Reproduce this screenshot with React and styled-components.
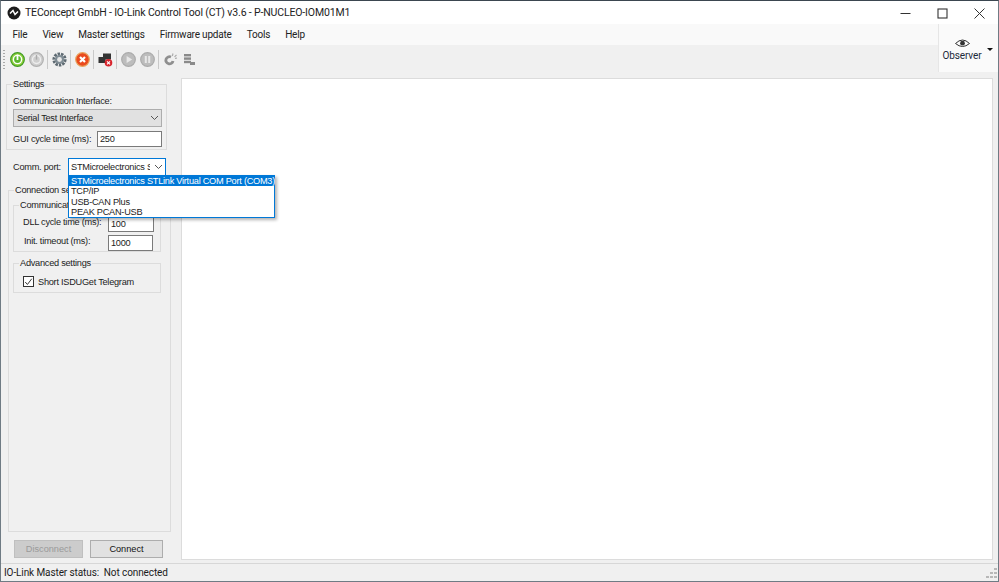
import React from 'react';
import styled, { createGlobalStyle } from 'styled-components';

const MENUS = ['File', 'View', 'Master settings', 'Firmware update', 'Tools', 'Help'];
const PORTS = ['STMicroelectronics STLink Virtual COM Port (COM3)', 'TCP/IP', 'USB-CAN Plus', 'PEAK PCAN-USB'];

function Chevron() {
  return (
    <svg width="9" height="6" viewBox="0 0 9 6" fill="none" stroke="#555" strokeWidth="1">
      <path d="M1 1 L4.5 4.5 L8 1" />
    </svg>
  );
}

function RoundIcon({ color, rim, children }) {
  return (
    <svg width="15" height="15" viewBox="0 0 15 15">
      <circle cx="7.5" cy="7.5" r="6.8" fill={color} stroke={rim} strokeWidth="1.2" />
      {children}
    </svg>
  );
}

function Toolbar() {
  return (
    <ToolRow>
      <Grip />
      <ToolIcon>
        <RoundIcon color="#8fd13c" rim="#3f9a22">
          <circle cx="7.5" cy="7.5" r="4.8" fill="#fff" />
          <circle cx="7.5" cy="7.5" r="3.4" fill="#5cb82c" />
          <rect x="6.6" y="2.5" width="1.8" height="5.5" fill="#fff" />
        </RoundIcon>
      </ToolIcon>
      <ToolIcon>
        <RoundIcon color="#cfcfcf" rim="#b0b0b0">
          <circle cx="7.5" cy="7.5" r="4" fill="none" stroke="#eee" strokeWidth="1.4" />
          <rect x="6.8" y="3" width="1.4" height="4.6" fill="#aaa" />
        </RoundIcon>
      </ToolIcon>
      <Sep />
      <ToolIcon>
        <svg width="15" height="15" viewBox="0 0 15 15">
          <circle cx="7.5" cy="7.5" r="5.6" fill="none" stroke="#5f6b73" strokeWidth="3" strokeDasharray="2.4 1" />
          <circle cx="7.5" cy="7.5" r="4.6" fill="#7f8c94" />
          <circle cx="7.5" cy="7.5" r="2.4" fill="#e8e8e8" />
        </svg>
      </ToolIcon>
      <Sep />
      <ToolIcon>
        <RoundIcon color="#ea4b1e" rim="#e8a35c">
          <path d="M5 5 L10 10 M10 5 L5 10" stroke="#fff" strokeWidth="2.2" />
        </RoundIcon>
      </ToolIcon>
      <Sep />
      <ToolIcon>
        <svg width="15" height="15" viewBox="0 0 15 15">
          <rect x="5" y="1.5" width="8" height="6" fill="#333" />
          <rect x="0.5" y="5" width="7" height="6" fill="#333" />
          <circle cx="10.5" cy="10.8" r="3.8" fill="#d8242c" />
          <path d="M9 9.3 L12 12.3 M12 9.3 L9 12.3" stroke="#fff" strokeWidth="1.2" />
        </svg>
      </ToolIcon>
      <Sep />
      <ToolIcon>
        <RoundIcon color="#bdbdbd" rim="#ababab">
          <path d="M5.6 4 L11.2 7.5 L5.6 11 Z" fill="#e8e8e8" />
        </RoundIcon>
      </ToolIcon>
      <ToolIcon>
        <RoundIcon color="#bdbdbd" rim="#ababab">
          <rect x="4.8" y="4" width="2" height="7" fill="#e8e8e8" />
          <rect x="8.2" y="4" width="2" height="7" fill="#e8e8e8" />
        </RoundIcon>
      </ToolIcon>
      <Sep />
      <ToolIcon>
        <svg width="15" height="15" viewBox="0 0 15 15" fill="none">
          <path d="M8 5 A3.6 3.6 0 1 0 10 9" stroke="#8f8f8f" strokeWidth="2.8" />
          <path d="M10 1.5 L9.4 4 M13.5 3 L11.5 4.8 M14 6 L12 6.4" stroke="#a8a8a8" strokeWidth="1.1" />
        </svg>
      </ToolIcon>
      <ToolIcon>
        <svg width="15" height="15" viewBox="0 0 15 15" fill="#8a8a8a">
          <rect x="2" y="2" width="7" height="2.4" />
          <rect x="2" y="5.4" width="7" height="2.4" />
          <rect x="2" y="8.8" width="7" height="2.4" />
          <rect x="8" y="10" width="5" height="3" />
        </svg>
      </ToolIcon>
    </ToolRow>
  );
}

export default function App() {
  return (
    <>
      <GlobalStyle />
      <Window>
        <TitleBar>
          <TitleLeft>
            <svg width="14" height="14" viewBox="0 0 14 14">
              <circle cx="7" cy="7" r="6.5" fill="#1c1c1c" />
              <path d="M3 7.5 L6 4.5 L8 8.5 L11 5.5" fill="none" stroke="#fff" strokeWidth="1.5" />
            </svg>
            <TitleText>TEConcept GmbH - IO-Link Control Tool (CT) v3.6 - P-NUCLEO-IOM01M1</TitleText>
          </TitleLeft>
          <WinButtons>
            <WinButton>
              <svg width="11" height="11" viewBox="0 0 11 11" stroke="#333" fill="none"><path d="M0.5 5.5 H10.5" /></svg>
            </WinButton>
            <WinButton>
              <svg width="11" height="11" viewBox="0 0 11 11" stroke="#333" fill="none"><rect x="1" y="1" width="9" height="9" strokeWidth="1.1" /></svg>
            </WinButton>
            <WinButton>
              <svg width="11" height="11" viewBox="0 0 11 11" stroke="#333" fill="none"><path d="M0.5 0.5 L10.5 10.5 M10.5 0.5 L0.5 10.5" /></svg>
            </WinButton>
          </WinButtons>
        </TitleBar>

        <TopArea>
          <TopLeft>
            <MenuBar>
              {MENUS.map((m) => <MenuItem key={m}>{m}</MenuItem>)}
            </MenuBar>
            <Toolbar />
          </TopLeft>
          <Observer>
            <svg width="15" height="9" viewBox="0 0 15 9">
              <path d="M0.5 4.5 Q7.5 -2.5 14.5 4.5 Q7.5 10.5 0.5 4.5 Z" fill="none" stroke="#333" strokeWidth="1" />
              <circle cx="7.5" cy="4.2" r="2.4" fill="#333" />
            </svg>
            <ObserverLabel>Observer</ObserverLabel>
            <Caret />
          </Observer>
        </TopArea>

        <Main>
          <Sidebar>
            <SettingsGroup>
              <GroupLegend $x={-1}>Settings</GroupLegend>
              <SmallLabel>Communication Interface:</SmallLabel>
              <GreySelect>
                <span>Serial Test Interface</span>
                <Chevron />
              </GreySelect>
              <FieldRow>
                <span>GUI cycle time (ms):</span>
                <TextBox $w={65}>250</TextBox>
              </FieldRow>
            </SettingsGroup>

            <PortRow>
              <span>Comm. port:</span>
              <PortSelect>
                <PortValue>STMicroelectronics STLink Virtual COM Port (COM3)</PortValue>
                <Chevron />
              </PortSelect>
              <PortList>
                {PORTS.map((p, i) => <PortOption key={p} $active={i === 0}>{p}</PortOption>)}
              </PortList>
            </PortRow>

            <ConnectionGroup>
              <GroupLegend $x={1}>Connection settings</GroupLegend>
              <InnerGroup>
                <GroupLegend $x={-4}>Communication</GroupLegend>
                <InnerField>
                  <span>DLL cycle time (ms):</span>
                  <TextBox $w={46}>100</TextBox>
                </InnerField>
                <InnerField $indent>
                  <span>Init. timeout (ms):</span>
                  <TextBox $w={45}>1000</TextBox>
                </InnerField>
              </InnerGroup>
              <AdvancedGroup>
                <GroupLegend $x={-4}>Advanced settings</GroupLegend>
                <CheckRow>
                  <CheckBox>
                    <svg width="10" height="10" viewBox="0 0 11 11" fill="none" stroke="#222" strokeWidth="1.1">
                      <path d="M1.5 5.5 L4.2 8.5 L9.5 1.5" />
                    </svg>
                  </CheckBox>
                  <span>Short ISDUGet Telegram</span>
                </CheckRow>
              </AdvancedGroup>
            </ConnectionGroup>

            <ButtonRow>
              <DisabledButton>Disconnect</DisabledButton>
              <ConnectButton>Connect</ConnectButton>
            </ButtonRow>
          </Sidebar>
          <Canvas />
        </Main>

        <StatusBar>
          <span>IO-Link Master status:&nbsp; Not connected</span>
          <ResizeGrip />
        </StatusBar>
      </Window>
    </>
  );
}

const GlobalStyle = createGlobalStyle`
  html, body {
    margin: 0;
    padding: 0;
    overflow: hidden;
    background: #f0f0f0;
  }
  body {
    font-family: "Liberation Sans", Arial, sans-serif;
    font-size: 9.2px;
    letter-spacing: -0.25px;
    white-space: nowrap;
    color: #1c1c1c;
  }
`;

const Window = styled.div`
  width: 999px;
  height: 582px;
  box-sizing: border-box;
  display: flex;
  flex-direction: column;
  background: #f0f0f0;
  border-left: 1px solid #6f7b84;
  border-right: 1px solid #6f7b84;
  border-bottom: 1px solid #6f7b84;
  border-top: 1px solid #3b4650;
`;

const TitleBar = styled.div`
  height: 23px;
  flex: none;
  display: flex;
  align-items: center;
  justify-content: space-between;
  background: #fff;
`;

const TitleLeft = styled.div`
  display: flex;
  align-items: center;
  gap: 4px;
  padding-left: 6px;
`;

const TitleText = styled.span`
  font-family: Roboto, sans-serif;
  font-size: 10.5px;
  letter-spacing: -0.15px;
  color: #222;
`;

const WinButtons = styled.div`
  display: flex;
`;

const WinButton = styled.div`
  width: 37px;
  height: 23px;
  display: flex;
  align-items: center;
  justify-content: center;
  padding-top: 2px;
  box-sizing: border-box;
`;

const TopArea = styled.div`
  height: 48px;
  flex: none;
  display: flex;
  background: #f0f0f0;
`;

const TopLeft = styled.div`
  flex: 1;
  display: flex;
  flex-direction: column;
`;

const MenuBar = styled.div`
  height: 21px;
  display: flex;
  align-items: center;
  padding: 0 0 1px 4px;
  box-sizing: border-box;
  background: #f9f9f9;
`;

const MenuItem = styled.div`
  font-family: Roboto, sans-serif;
  font-size: 10px;
  letter-spacing: -0.2px;
  color: #222;
  padding: 0 7.5px;
`;

const ToolRow = styled.div`
  flex: 1;
  display: flex;
  align-items: center;
  padding-left: 2px;
  padding-top: 1px;
`;

const Grip = styled.div`
  width: 2px;
  height: 19px;
  margin-right: 3px;
  background: repeating-linear-gradient(to bottom, #a9a9a9 0 1px, transparent 1px 3px);
`;

const ToolIcon = styled.div`
  width: 19px;
  height: 18px;
  display: flex;
  align-items: center;
  justify-content: center;
`;

const Sep = styled.div`
  width: 1px;
  height: 19px;
  margin: 0 2px 0 1px;
  background: #c9c9c9;
`;

const Observer = styled.div`
  position: relative;
  width: 60px;
  flex: none;
  box-sizing: border-box;
  display: flex;
  flex-direction: column;
  align-items: center;
  padding-top: 15px;
  padding-right: 13px;
  background: #fafafa;
  border-left: 1px solid #e6e6e6;
`;

const ObserverLabel = styled.span`
  font-family: Roboto, sans-serif;
  font-size: 10px;
  letter-spacing: -0.1px;
  line-height: 13px;
  margin-top: 1px;
  color: #1c2a3a;
`;

const Caret = styled.div`
  position: absolute;
  right: 5px;
  top: 24px;
  width: 0;
  height: 0;
  border-left: 3px solid transparent;
  border-right: 3px solid transparent;
  border-top: 3px solid #111;
`;

const Main = styled.div`
  flex: 1;
  min-height: 0;
  display: flex;
  padding: 6px 5px 3px 0;
`;

const Sidebar = styled.div`
  width: 180px;
  flex: none;
  display: flex;
  flex-direction: column;
  padding-left: 5px;
  box-sizing: border-box;
`;

const GroupBox = styled.fieldset`
  margin: 0;
  min-width: 0;
  box-sizing: border-box;
  border: 1px solid #dcdcdc;
  border-radius: 0;
  display: flex;
  flex-direction: column;
`;

const GroupLegend = styled.legend`
  padding: 0 1px;
  margin-left: ${(p) => p.$x}px;
  line-height: 12px;
  color: #222;
`;

const SettingsGroup = styled(GroupBox)`
  flex: none;
  width: 161px;
  height: 72px;
  padding: 5px 3px 0 6px;
`;

const SmallLabel = styled.div`
  line-height: 13px;
  margin-bottom: 1px;
`;

const GreySelect = styled.div`
  height: 18px;
  width: 149px;
  margin-bottom: 4px;
  display: flex;
  align-items: center;
  justify-content: space-between;
  padding: 0 2px 0 3px;
  box-sizing: border-box;
  background: #e1e1e1;
  border: 1px solid #adadad;
`;

const FieldRow = styled.div`
  display: flex;
  align-items: center;
  justify-content: space-between;
  width: 149px;
`;

const TextBox = styled.div`
  width: ${(p) => p.$w}px;
  height: 16px;
  box-sizing: border-box;
  display: flex;
  align-items: center;
  padding-left: 2px;
  background: #fff;
  border: 1px solid #7a7a7a;
`;

const PortRow = styled.div`
  position: relative;
  flex: none;
  display: flex;
  align-items: center;
  padding-left: 7px;
  margin-top: 7px;
  height: 19px;
`;

const PortSelect = styled.div`
  position: absolute;
  left: 62px;
  top: 1px;
  width: 98px;
  height: 18px;
  box-sizing: border-box;
  display: flex;
  align-items: center;
  justify-content: space-between;
  padding: 0 2px 0 2px;
  background: #fff;
  border: 1px solid #0078d7;
`;

const PortValue = styled.span`
  width: 79px;
  overflow: hidden;
`;

const PortList = styled.div`
  position: absolute;
  left: 62px;
  top: 18px;
  width: 207px;
  z-index: 5;
  box-sizing: border-box;
  background: #fff;
  border: 1px solid #0078d7;
  box-shadow: 2px 2px 3px rgba(0, 0, 0, 0.3);
`;

const PortOption = styled.div`
  height: 10.25px;
  line-height: 10px;
  padding-left: 2px;
  background: ${(p) => (p.$active ? '#0078d7' : 'transparent')};
  color: ${(p) => (p.$active ? '#fff' : '#1c1c1c')};
`;

const ConnectionGroup = styled(GroupBox)`
  flex: none;
  width: 163px;
  height: 348px;
  margin: 8px 0 0 2px;
  padding: 3px 9px 0 4px;
`;

const InnerGroup = styled(GroupBox)`
  flex: none;
  height: 53px;
  padding: 5px 0 0 9px;
  gap: 3px;
`;

const InnerField = styled.div`
  display: flex;
  align-items: flex-start;
  justify-content: space-between;
  line-height: 13px;
  width: 131px;
  padding-left: ${(p) => (p.$indent ? '1px' : '0')};
  padding-right: ${(p) => (p.$indent ? '1px' : '0')};
  box-sizing: border-box;
`;

const AdvancedGroup = styled(GroupBox)`
  flex: none;
  height: 36px;
  margin-top: 5px;
  padding: 7px 0 0 9px;
`;

const CheckRow = styled.div`
  display: flex;
  align-items: center;
  gap: 4px;
`;

const CheckBox = styled.div`
  width: 11px;
  height: 11px;
  flex: none;
  box-sizing: border-box;
  display: flex;
  align-items: center;
  justify-content: center;
  background: #fff;
  border: 1px solid #333;
`;

const ButtonRow = styled.div`
  flex: none;
  display: flex;
  gap: 7px;
  margin-top: 8px;
  padding-left: 8px;
`;

const ActionButton = styled.div`
  height: 18px;
  box-sizing: border-box;
  display: flex;
  align-items: center;
  justify-content: center;
  letter-spacing: 0;
`;

const DisabledButton = styled(ActionButton)`
  width: 69px;
  background: #cccccc;
  border: 1px solid #bfbfbf;
  color: #9a9a9a;
`;

const ConnectButton = styled(ActionButton)`
  width: 73px;
  background: #e1e1e1;
  border: 1px solid #adadad;
  color: #111;
`;

const Canvas = styled.div`
  flex: 1;
  background: #fff;
  border: 1px solid #dcdcdc;
`;

const StatusBar = styled.div`
  position: relative;
  height: 18px;
  flex: none;
  display: flex;
  align-items: center;
  padding-left: 3px;
  border-top: 1px solid #d7d7d7;
  box-sizing: border-box;
  font-family: Roboto, sans-serif;
  font-size: 10px;
  letter-spacing: -0.1px;
`;

const ResizeGrip = styled.div`
  position: absolute;
  right: 1px;
  bottom: 2px;
  width: 11px;
  height: 11px;
  background:
    linear-gradient(#b8b8b8, #b8b8b8) 8px 0 / 3px 2px no-repeat,
    linear-gradient(#b8b8b8, #b8b8b8) 4px 4px / 3px 2px no-repeat,
    linear-gradient(#b8b8b8, #b8b8b8) 8px 4px / 3px 2px no-repeat,
    linear-gradient(#b8b8b8, #b8b8b8) 0 8px / 3px 2px no-repeat,
    linear-gradient(#b8b8b8, #b8b8b8) 4px 8px / 3px 2px no-repeat,
    linear-gradient(#b8b8b8, #b8b8b8) 8px 8px / 3px 2px no-repeat;
`;
